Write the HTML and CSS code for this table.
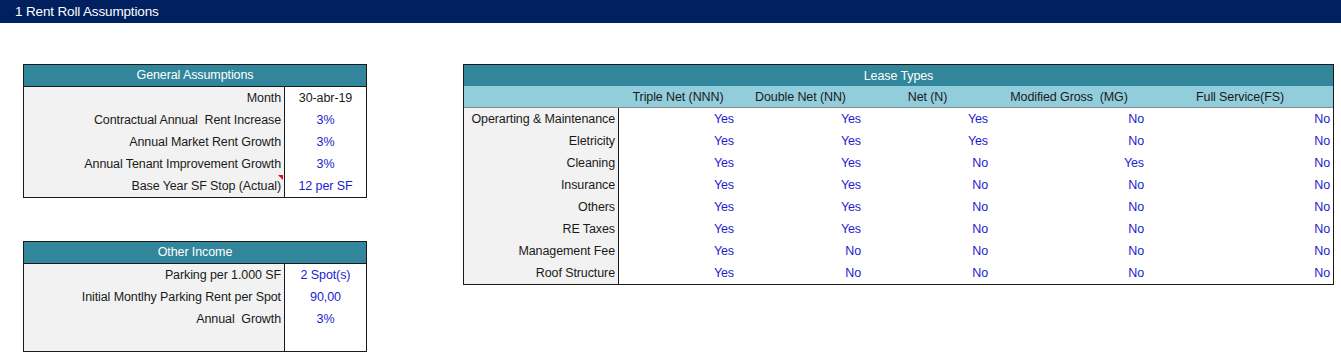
FILE: index.html
```html
<!DOCTYPE html>
<html>
<head>
<meta charset="utf-8">
<link rel="stylesheet" href="styles.css">
</head>
<body>
<div class="topbar">1 Rent Roll Assumptions</div>
<div class="content">
  <div class="leftcol">
    <div class="box kv">
      <div class="head">General Assumptions</div>
      <div class="lbl">Month</div><div class="val dark">30-abr-19</div>
      <div class="lbl">Contractual Annual&nbsp; Rent Increase</div><div class="val">3%</div>
      <div class="lbl">Annual Market Rent Growth</div><div class="val">3%</div>
      <div class="lbl">Annual Tenant Improvement Growth</div><div class="val">3%</div>
      <div class="lbl note">Base Year SF Stop (Actual)<span class="flag"></span></div><div class="val">12 per SF</div>
    </div>
    <div class="box kv other">
      <div class="head">Other Income</div>
      <div class="lbl">Parking per 1.000 SF</div><div class="val">2 Spot(s)</div>
      <div class="lbl">Initial Montlhy Parking Rent per Spot</div><div class="val">90,00</div>
      <div class="lbl">Annual&nbsp; Growth</div><div class="val">3%</div>
      <div class="lbl"></div><div class="val"></div>
    </div>
  </div>
  <div class="box lease">
    <div class="head">Lease Types</div>
    <div class="sub"></div>
    <div class="sub">Triple Net (NNN)</div>
    <div class="sub">Double Net (NN)</div>
    <div class="sub">Net (N)</div>
    <div class="sub">Modified Gross&nbsp; (MG)</div>
    <div class="sub">Full Service(FS)</div>

    <div class="lbl">Operarting &amp; Maintenance</div><div class="v">Yes</div><div class="v">Yes</div><div class="v">Yes</div><div class="v">No</div><div class="v">No</div>
    <div class="lbl">Eletricity</div><div class="v">Yes</div><div class="v">Yes</div><div class="v">Yes</div><div class="v">No</div><div class="v">No</div>
    <div class="lbl">Cleaning</div><div class="v">Yes</div><div class="v">Yes</div><div class="v">No</div><div class="v">Yes</div><div class="v">No</div>
    <div class="lbl">Insurance</div><div class="v">Yes</div><div class="v">Yes</div><div class="v">No</div><div class="v">No</div><div class="v">No</div>
    <div class="lbl">Others</div><div class="v">Yes</div><div class="v">Yes</div><div class="v">No</div><div class="v">No</div><div class="v">No</div>
    <div class="lbl">RE Taxes</div><div class="v">Yes</div><div class="v">Yes</div><div class="v">No</div><div class="v">No</div><div class="v">No</div>
    <div class="lbl">Management Fee</div><div class="v">Yes</div><div class="v">No</div><div class="v">No</div><div class="v">No</div><div class="v">No</div>
    <div class="lbl">Roof Structure</div><div class="v">Yes</div><div class="v">No</div><div class="v">No</div><div class="v">No</div><div class="v">No</div>
  </div>
</div>
</body>
</html>
```

FILE: styles.css
```css
* { box-sizing: border-box; }
body {
  margin: 0;
  background: #fff;
  font-family: "Liberation Sans", Arial, sans-serif;
  font-size: 12.5px;
  letter-spacing: -0.1px;
  color: #1a1a1a;
}
.topbar {
  height: 23px;
  line-height: 23px;
  background: #002060;
  color: #fff;
  padding-left: 15px;
  font-size: 13.5px;
  letter-spacing: -0.15px;
}
.content {
  display: flex;
  align-items: flex-start;
  padding: 41px 0 0 23px;
}
.leftcol {
  display: flex;
  flex-direction: column;
  gap: 43px;
  width: 344px;
}
.box {
  border: 1px solid #1a1a1a;
}
.head {
  grid-column: 1 / -1;
  background: #31869b;
  color: #fff;
  text-align: center;
  line-height: 21px;
  border-bottom: 1px solid #1a1a1a;
}
.kv {
  display: grid;
  grid-template-columns: 261px 1fr;
  grid-template-rows: 22px;
  grid-auto-rows: 22px;
}
.kv.other { grid-template-rows: 22px 22px 22px 22px 21px; }
.lbl {
  background: #f2f2f2;
  text-align: right;
  padding-right: 3px;
  line-height: 22px;
  border-right: 1px solid #1a1a1a;
  white-space: nowrap;
  position: relative;
}
.val {
  text-align: center;
  line-height: 22px;
  color: #1c1cd0;
}
.val.dark { color: #1a1a1a; }
.flag {
  position: absolute;
  right: 1px;
  top: 0;
  width: 0;
  height: 0;
  border-top: 5px solid #e01010;
  border-left: 5px solid transparent;
}
.lease {
  margin-left: 96px;
  width: 871px;
  display: grid;
  grid-template-columns: 155px 118px 127px 127px 156px 1fr;
  grid-template-rows: 21px 22px;
  grid-auto-rows: 22px;
}
.lease > div { padding-top: 1px; }
.lease .head { border-bottom: 0; line-height: 20px; }
.sub {
  background: #92cddc;
  text-align: center;
  line-height: 21px;
  border-bottom: 1px solid #8a8a8a;
}
.lease .lbl { border-right: 1px solid #1a1a1a; line-height: 21px; }
.v {
  text-align: right;
  padding-right: 3px;
  line-height: 21px;
  color: #1c1cd0;
}
```
